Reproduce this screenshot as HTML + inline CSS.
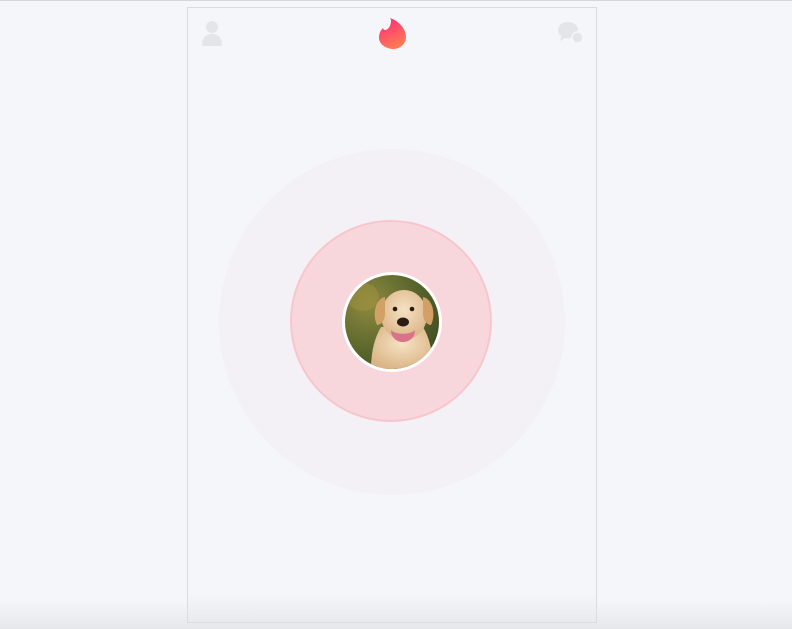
<!DOCTYPE html>
<html><head><meta charset="utf-8"><style>
html,body{margin:0;padding:0}
body{width:792px;height:629px;background:#f5f6fa;position:relative;overflow:hidden;font-family:"Liberation Sans",sans-serif}
.topline{position:absolute;left:0;top:0;width:792px;height:1px;background:#d6d6d8}
.bottomshade{position:absolute;left:0;top:600px;width:792px;height:29px;background:linear-gradient(#f5f6fa,#e6e7ea)}
.box{position:absolute;left:187px;top:7px;width:408px;height:614px;border:1px solid #dcdce0;background:linear-gradient(#f5f6fa 0,#f5f6fa 585px,#e9eaee 614px)}
.c{position:absolute;border-radius:50%}
.outer{left:219px;top:149px;width:346px;height:346px;background:#f3f1f5}
.mid{width:198px;height:198px;background:#f8d7dc;border:2px solid #f7c6cc;box-sizing:content-box;left:290px;top:220px}
.photo{left:342px;top:272px;width:94px;height:94px;border:3px solid #fff;overflow:hidden;background:radial-gradient(circle at 25% 30%,#8f8a40,#55622a 55%,#34401a)}
</style></head><body>
<div class="topline"></div>
<div class="bottomshade"></div>
<div class="box"></div>
<svg style="position:absolute;left:201px;top:20px" width="22" height="26" viewBox="0 0 22 26"><circle cx="11" cy="7" r="6" fill="#e4e5e8"/><path d="M1 24c0-6 4-10 10-10s10 4 10 10c0 1-1 2-2 2H3c-1 0-2-1-2-2z" fill="#e4e5e8"/></svg>
<svg style="position:absolute;left:378px;top:17px" width="29" height="32" viewBox="0 0 29 32"><defs><linearGradient id="g" x1="0" y1="0" x2="0.4" y2="1"><stop offset="0" stop-color="#fd267d"/><stop offset="1" stop-color="#ff7854"/></linearGradient></defs><path d="M7 13c3 0 6-4 6-9 0-1 0-2-1-3 9 3 16 11 16 19 0 7-6 12-13 12S1 27 1 21c0-4 1-7 4-10 0 1 1 2 2 2z" fill="url(#g)"/></svg>
<svg style="position:absolute;left:557px;top:21px" width="28" height="24" viewBox="0 0 28 24"><path d="M11 1C5 1 1 4.5 1 9c0 2.5 1.3 4.5 3.5 6L3 20l5-3c1 .3 2 .4 3 .4 6 0 10-3.6 10-8.2S17 1 11 1z" fill="#e4e5e8"/><circle cx="20.5" cy="16.5" r="5.5" fill="#e4e5e8" stroke="#f5f6fa" stroke-width="1.5"/></svg>
<div class="c outer"></div>
<div class="c mid"></div>
<div class="c photo">
<svg width="94" height="94" viewBox="0 0 94 94"><defs><radialGradient id="d" cx="0.5" cy="0.4" r="0.6"><stop offset="0" stop-color="#f6e2c4"/><stop offset="1" stop-color="#dbb587"/></radialGradient></defs>
<ellipse cx="18" cy="22" rx="16" ry="14" fill="#a0923e" opacity=".5"/>
<path d="M26 94c0-18 4-32 10-42h42c6 10 10 24 10 42z" fill="url(#d)"/>
<ellipse cx="59" cy="40" rx="23" ry="25" fill="url(#d)"/>
<path d="M40 22c-10 2-13 18-8 28 4 0 7-4 8-10z" fill="#d0a066"/>
<path d="M78 22c10 2 13 18 8 28-4 0-7-4-8-10z" fill="#d0a066"/>
<circle cx="50" cy="34" r="2.3" fill="#2a1a10"/><circle cx="67" cy="34" r="2.3" fill="#2a1a10"/>
<ellipse cx="58" cy="47" rx="6" ry="4.5" fill="#2b1c16"/>
<path d="M46 55c4 5 20 5 24 0 0 7-5 12-12 12s-12-5-12-12z" fill="#d9728a"/>
</svg></div>
</body></html>
